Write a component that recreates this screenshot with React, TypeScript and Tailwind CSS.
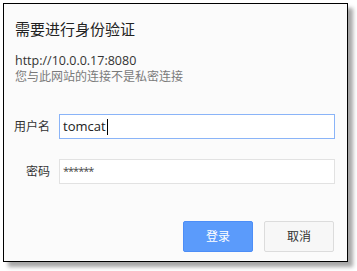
import React from 'react';

const font = { fontFamily: '"Segoe UI", "Open Sans", "Noto Sans CJK SC", sans-serif' };

export default function App() {
  return (
    <div className="h-[271px] w-[357px] bg-white pl-[3px] pt-[3px]" style={font}>
      <div className="flex h-[259px] w-[345px] flex-col border border-black bg-[#fbfbfb] shadow-[5px_5px_4px_rgba(0,0,0,0.35)]">
        <div className="pl-[11px] pt-[14px] text-[15px] leading-[22px] text-[#222]">需要进行身份验证</div>
        <div className="pl-[11px] pt-[12px] text-[12.5px] leading-[17px] text-[#333]">http://10.0.0.17:8080</div>
        <div className="pl-[11px] text-[12px] leading-[16px] text-[#7a7a7a]">您与此网站的连接不是私密连接</div>

        <div className="mt-[29px] flex items-center">
          <label className="w-[46px] text-right text-[12px] text-[#333]">用户名</label>
          <div className="ml-[9px] flex h-[25px] w-[276px] items-center border border-[#8ab4f8] bg-white pl-[3px] text-[13px] text-[#222]">
            tomcat<span className="ml-[1px] h-[16px] w-px bg-black" />
          </div>
        </div>

        <div className="mt-[20px] flex items-center">
          <label className="w-[46px] text-right text-[12px] text-[#333]">密码</label>
          <div className="ml-[9px] flex h-[25px] w-[276px] items-center border border-[#e2e2e2] bg-white pl-[3px] text-[11px] tracking-[-1px] text-[#444]">
            ******
          </div>
        </div>

        <div className="mt-[37px] flex justify-end gap-[11px] pr-[13px]">
          <button className="h-[31px] w-[70px] rounded-[2px] border border-[#4d8ef7] bg-[#5b9bfb] text-[12px] text-white">登录</button>
          <button className="h-[31px] w-[70px] rounded-[2px] border border-[#dcdcdc] bg-[#f7f7f7] text-[12px] text-[#333]">取消</button>
        </div>
      </div>
    </div>
  );
}
